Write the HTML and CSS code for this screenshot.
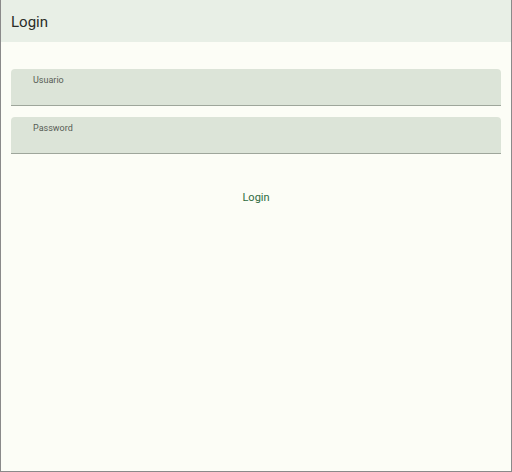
FILE: index.html
```html
<!DOCTYPE html>
<html>
<head>
<meta charset="utf-8">
<link rel="stylesheet" href="styles.css">
</head>
<body>
<div class="app">
  <header class="topbar"><span class="title">Login</span></header>
  <main class="content">
    <div class="field"><span class="label">Usuario</span></div>
    <div class="field"><span class="label">Password</span></div>
    <div class="actions"><button class="btn">Login</button></div>
  </main>
</div>
</body>
</html>
```
FILE: styles.css
```css
html, body {
  margin: 0;
  padding: 0;
  background: #fcfdf6;
}
.app {
  width: 512px;
  height: 472px;
  box-sizing: border-box;
  border-left: 1px solid #8a8a8a;
  border-right: 1px solid #8a8a8a;
  border-bottom: 1px solid #8a8a8a;
  background: #fcfdf6;
  font-family: Roboto, "Liberation Sans", sans-serif;
  display: flex;
  flex-direction: column;
}
.topbar {
  height: 42px;
  box-sizing: border-box;
  background: #e8efe6;
  display: flex;
  align-items: center;
  padding: 2px 0 0 10px;
}
.title {
  font-size: 15px;
  color: #2a2c28;
}
.content {
  padding: 27px 10px 0 10px;
  display: flex;
  flex-direction: column;
  gap: 11px;
}
.field {
  height: 37px;
  box-sizing: border-box;
  background: #dce4d8;
  border-radius: 4px 4px 0 0;
  border-bottom: 1px solid #9ea69b;
  padding: 6px 0 0 22px;
}
.label {
  font-size: 9px;
  color: #575c55;
  display: block;
}
.actions {
  display: flex;
  justify-content: center;
  margin-top: 16px;
}
.btn {
  background: none;
  border: none;
  font-family: Roboto, "Liberation Sans", sans-serif;
  font-size: 11px;
  color: #2f6b3e;
  padding: 10px 16px;
}
```
